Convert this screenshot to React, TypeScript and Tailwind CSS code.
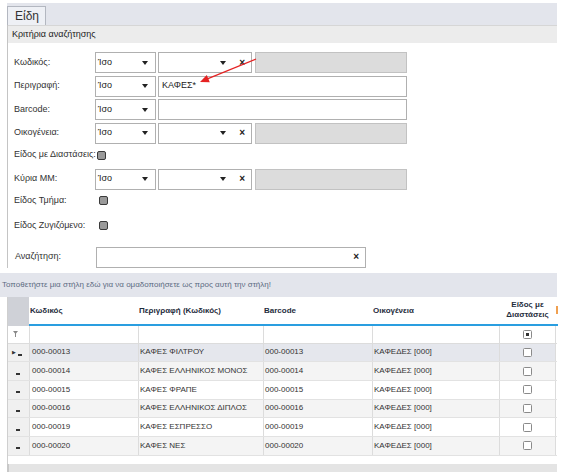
import { ReactNode } from "react";

type Item = { code: string; desc: string; family: string };

const items: Item[] = [
    { code: "000-00013", desc: "ΚΑΦΕΣ ΦΙΛΤΡΟΥ", family: "ΚΑΦΕΔΕΣ [000]" },
    { code: "000-00014", desc: "ΚΑΦΕΣ ΕΛΛΗΝΙΚΟΣ ΜΟΝΟΣ", family: "ΚΑΦΕΔΕΣ [000]" },
    { code: "000-00015", desc: "ΚΑΦΕΣ ΦΡΑΠΕ", family: "ΚΑΦΕΔΕΣ [000]" },
    { code: "000-00016", desc: "ΚΑΦΕΣ ΕΛΛΗΝΙΚΟΣ ΔΙΠΛΟΣ", family: "ΚΑΦΕΔΕΣ [000]" },
    { code: "000-00019", desc: "ΚΑΦΕΣ ΕΣΠΡΕΣΣΟ", family: "ΚΑΦΕΔΕΣ [000]" },
    { code: "000-00020", desc: "ΚΑΦΕΣ ΝΕΣ", family: "ΚΑΦΕΔΕΣ [000]" },
];

function Caret() {
    return <svg width="6" height="4" viewBox="0 0 6 4" className="shrink-0"><path d="M0 0H6L3 4Z" fill="#222" /></svg>;
}

function Cross() {
    return <span className="text-[10px] font-bold leading-none text-[#222]">×</span>;
}

function SelectBox({ value = "Ίσο" }: { value?: string }) {
    return (
        <div className="w-[61px] h-[21px] border border-[#b0b0b0] bg-white flex items-center justify-between pl-[2px] pr-[7px] text-[9px] text-[#222]">
            <span>{value}</span>
            <Caret />
        </div>
    );
}

function ComboBox() {
    return (
        <div className="w-[94px] h-[21px] border border-[#b0b0b0] bg-white flex items-center justify-end gap-[13px] pr-[6px]">
            <Caret />
            <Cross />
        </div>
    );
}

function GrayBox() {
    return <div className="w-[152px] h-[21px] border border-[#c2c2c2] bg-[#dcdcdc]" />;
}

function TextBox({ value }: { value?: string }) {
    return (
        <div className="w-[249px] h-[21px] border border-[#b0b0b0] bg-white flex items-center pl-[3px] text-[9px] text-[#222]">
            {value}
        </div>
    );
}

function FormCheck() {
    return <div className="w-[9px] h-[9px] rounded-[2px] border-[1.5px] border-[#3a3a3a] bg-[#9a9a9a]" />;
}

type RowProps = { label: string; children?: ReactNode; className?: string };

function FieldRow({ label, children, className = "" }: RowProps) {
    return (
        <div className={`flex items-center ${className}`}>
            <div className="w-[81px] shrink-0 text-[9px] text-[#333] whitespace-nowrap">{label}</div>
            <div className="flex items-center">{children}</div>
        </div>
    );
}

function GridCheck({ dot }: { dot?: boolean }) {
    return (
        <div className="w-[9px] h-[9px] rounded-[1.5px] border border-[#8a8a8a] bg-white flex items-center justify-center">
            {dot && <div className="w-[3px] h-[3px] bg-[#333]" />}
        </div>
    );
}

function Funnel() {
    return (
        <svg width="5" height="6" viewBox="0 0 5 6">
            <path d="M0 0H5L3 2.5V6H2V2.5Z" fill="#888" />
        </svg>
    );
}

const cols = "grid grid-cols-[21px_109px_125px_109px_127px_57px_2px]";

export default function App() {
    return (
        <div className="relative w-[562px] h-[472px] overflow-hidden bg-white font-['Liberation_Sans',Arial,sans-serif]">
            <div className="pt-[3px] pr-[5px]">
                {/* tab strip */}
                <div className="ml-[7px] h-[22px] bg-[#e3e5ec] flex items-end">
                    <div className="w-[39px] h-[19px] border border-b-0 border-[#b3b7c0] bg-[#eef0f5] pl-[7px] text-[12px] leading-[18px] text-[#333]">Είδη</div>
                </div>

                <div className="ml-[7px] border-l border-[#c4c4c4]">
                    <div className="h-[18px] bg-[#ececec] border-t border-[#d6d6d6] pl-[4px] text-[9px] leading-[17px] text-[#222]">Κριτήρια αναζήτησης</div>

                    <div className="pl-[6px] pt-[9px] flex flex-col">
                        <FieldRow label="Κωδικός:">
                            <SelectBox />
                            <div className="ml-[2px]"><ComboBox /></div>
                            <div className="ml-[3px]"><GrayBox /></div>
                        </FieldRow>
                        <FieldRow label="Περιγραφή:" className="mt-[2.5px]">
                            <SelectBox />
                            <div className="ml-[2px]"><TextBox value="ΚΑΦΕΣ*" /></div>
                        </FieldRow>
                        <FieldRow label="Barcode:" className="mt-[2.5px]">
                            <SelectBox />
                            <div className="ml-[2px]"><TextBox /></div>
                        </FieldRow>
                        <FieldRow label="Οικογένεια:" className="mt-[2.5px]">
                            <SelectBox />
                            <div className="ml-[2px]"><ComboBox /></div>
                            <div className="ml-[3px]"><GrayBox /></div>
                        </FieldRow>
                        <FieldRow label="Είδος με Διαστάσεις:" className="h-[23px]">
                            <div className="ml-[2px]"><FormCheck /></div>
                        </FieldRow>
                        <FieldRow label="Κύρια ΜΜ:" className="mt-[2px]">
                            <SelectBox />
                            <div className="ml-[2px]"><ComboBox /></div>
                            <div className="ml-[3px]"><GrayBox /></div>
                        </FieldRow>
                        <FieldRow label="Είδος Τμήμα:" className="h-[22px]">
                            <div className="ml-[4px]"><FormCheck /></div>
                        </FieldRow>
                        <FieldRow label="Είδος Ζυγιζόμενο:" className="h-[28px]">
                            <div className="ml-[4px]"><FormCheck /></div>
                        </FieldRow>
                        <FieldRow label="Αναζήτηση:" className="mt-[7px] pl-[1px]">
                            <div className="w-[270px] h-[21px] border border-[#b0b0b0] bg-white flex items-center justify-end pr-[6px]">
                                <Cross />
                            </div>
                        </FieldRow>
                    </div>
                </div>

                {/* group-by panel */}
                <div className="mt-[5px] h-[24px] bg-[#e3e5ec] pl-[2px] text-[8px] leading-[24px] text-[#5c6b82] whitespace-nowrap">
                    Τοποθετήστε μια στήλη εδώ για να ομαδοποιήσετε ως προς αυτή την στήλη!
                </div>

                {/* grid */}
                <div className="ml-[7px] border-l border-[#cfcfcf] h-[167px] text-[8px] text-[#333]">
                    <div className={`${cols} h-[27px]`}>
                        <div className="bg-[#cfd1d7]" />
                        <div className="pl-[1px] pt-[2px] font-bold text-[#1f2d3d] flex items-center">Κωδικός</div>
                        <div className="pl-[1px] pt-[2px] font-bold text-[#1f2d3d] flex items-center">Περιγραφή (Κωδικός)</div>
                        <div className="pl-[1px] pt-[2px] font-bold text-[#1f2d3d] flex items-center">Barcode</div>
                        <div className="pl-[1px] pt-[2px] font-bold text-[#1f2d3d] flex items-center">Οικογένεια</div>
                        <div className="font-bold text-[#1f2d3d] flex flex-col items-center justify-center leading-[10px] text-center">
                            <span>Είδος με</span>
                            <span>Διαστάσεις</span>
                        </div>
                        <div className="flex items-center"><div className="w-[2px] h-[8px] bg-[#f0a050]" /></div>
                    </div>
                    <div className={`${cols} h-[2px]`}>
                        <div className="bg-[#cfd1d7]" />
                        <div className="col-span-6 bg-[#2a9ee0]" />
                    </div>
                    <div className={`${cols} h-[18px] border-b border-[#dcdcdc]`}>
                        <div className="bg-white flex items-center pl-[5px]"><Funnel /></div>
                        <div className="border-l border-[#dcdcdc]" />
                        <div className="border-l border-[#dcdcdc]" />
                        <div className="border-l border-[#dcdcdc]" />
                        <div className="border-l border-[#dcdcdc]" />
                        <div className="border-l border-r border-[#dcdcdc] flex items-center justify-center"><GridCheck dot /></div>
                        <div />
                    </div>
                    {items.map((item, i) => (
                        <div key={item.code} className={`${cols} h-[18.7px] border-b border-[#e2e2e2] ${i === 0 ? "bg-[#e5e7ed]" : i % 2 === 1 ? "bg-[#f4f4f4]" : "bg-white"}`}>
                            <div className={`bg-[#f0f0f0] flex items-center gap-[2px] text-[#333] ${i === 0 ? "pl-[4px]" : "pl-[8px]"}`}>
                                {i === 0 && <span className="text-[5px] leading-[6px]">▶</span>}
                                <span className="w-[4px] h-[2px] mt-[5px] bg-[#333]" />
                            </div>
                            <div className="pl-[2px] flex items-center border-l border-[#dcdcdc]">{item.code}</div>
                            <div className="pl-[1px] flex items-center border-l border-[#dcdcdc]">{item.desc}</div>
                            <div className="pl-[1px] flex items-center border-l border-[#dcdcdc]">{item.code}</div>
                            <div className="pl-[1px] flex items-center border-l border-[#dcdcdc]">{item.family}</div>
                            <div className="flex items-center justify-center border-l border-r border-[#dcdcdc]"><GridCheck /></div>
                            <div className="bg-white" />
                        </div>
                    ))}
                </div>
                <div className="ml-[7px] h-[9px] bg-[#e4e4e4] border-l-2 border-[#c8c8c8]" />
            </div>

            {/* annotation arrow */}
            <svg className="absolute left-0 top-0 pointer-events-none" width="562" height="472">
                <line x1="256" y1="59" x2="208" y2="78.6" stroke="#e52222" strokeWidth="1.2" />
                <polygon points="200,82 209.8,82.3 206.8,74.9" fill="#e52222" />
            </svg>
        </div>
    );
}
